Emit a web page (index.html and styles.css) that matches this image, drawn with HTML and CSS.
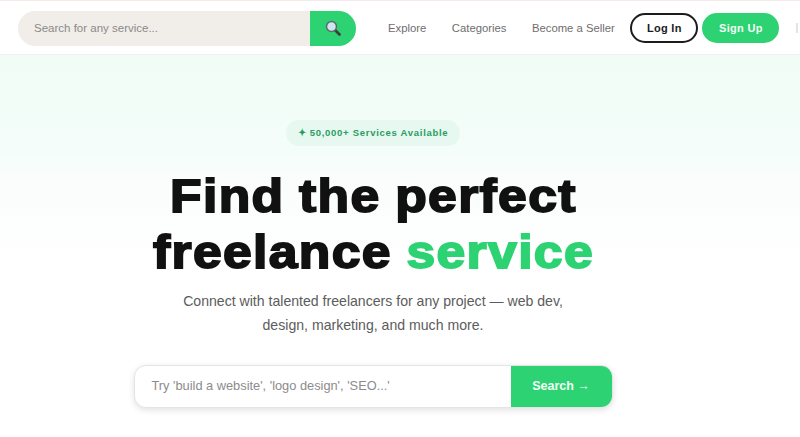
FILE: index.html
```html
<!DOCTYPE html>
<html lang="en">
<head>
<meta charset="utf-8">
<title>Find the perfect freelance service</title>
<link rel="stylesheet" href="styles.css">
</head>
<body>
<div class="top-line"></div>
<header class="nav">
  <form class="nav-search">
    <span class="nav-search-text">Search for any service...</span>
    <span class="nav-search-btn">
      <svg width="18" height="18" viewBox="0 0 18 18" aria-hidden="true">
        <line x1="11" y1="11" x2="15.5" y2="15.5" stroke="#3a3f3c" stroke-width="2.8" stroke-linecap="round"/>
        <circle cx="7.5" cy="7.5" r="5" fill="#cfe6ee" stroke="#5d6b70" stroke-width="1.5"/>
      </svg>
    </span>
  </form>
  <nav class="nav-links">
    <a>Explore</a>
    <a>Categories</a>
    <a>Become a Seller</a>
  </nav>
  <div class="nav-actions">
    <a class="btn btn-login">Log In</a>
    <a class="btn btn-signup">Sign Up</a>
  </div>
  <span class="nav-clipped"></span>
</header>
<main class="hero">
  <div class="badge">✦ 50,000+ Services Available</div>
  <h1 class="title">Find the perfect<br>freelance <span class="accent">service</span></h1>
  <p class="lead">Connect with talented freelancers for any project — web dev,<br>design, marketing, and much more.</p>
  <div class="hero-search">
    <span class="hero-search-text">Try 'build a website', 'logo design', 'SEO...'</span>
    <span class="hero-search-btn">Search <span class="arrow">→</span></span>
  </div>
</main>
</body>
</html>
```

FILE: styles.css
```css
* { box-sizing: border-box; }
html, body { margin: 0; height: 100%; }
body {
  width: 800px;
  height: 437px;
  overflow: hidden;
  background: #fff;
  font-family: "Liberation Sans", Arial, sans-serif;
}
.top-line { height: 1px; background: #f6e9ec; }
.nav {
  height: 54px;
  display: flex;
  align-items: center;
  padding: 1px 0 0 18px;
  background: #fff;
  border-bottom: 1px solid #f0f0f0;
}
.nav-search {
  flex: none;
  width: 338px;
  height: 35px;
  display: flex;
  margin: 0;
  background: #f1ede8;
  border-radius: 18px;
  overflow: hidden;
}
.nav-search-text {
  flex: 1;
  padding-left: 16px;
  font-size: 11.5px;
  line-height: 34px;
  color: #8a8a8a;
}
.nav-search-btn {
  width: 46px;
  display: flex;
  align-items: center;
  justify-content: center;
  background: #2dd272;
}
.nav-links {
  flex: none;
  display: flex;
  gap: 25.5px;
  margin-left: 32px;
  font-size: 11.3px;
  white-space: nowrap;
  color: #6e6e6e;
}
.nav-actions { flex: none; display: flex; gap: 4px; margin-left: 15.5px; }
.btn {
  height: 30px;
  border-radius: 15px;
  display: flex;
  align-items: center;
  justify-content: center;
  font-size: 11px;
  font-weight: 700;
  letter-spacing: .3px;
}
.btn-login { width: 68px; border: 2px solid #1c1c1c; color: #1c1c1c; background: #fff; }
.btn-signup { width: 77px; background: #2dd272; color: #f2fff7; }
.nav-clipped {
  flex: none;
  width: 2px;
  height: 10px;
  margin-left: 17px;
  background: #e4e4e4;
}
.hero {
  height: 382px;
  display: flex;
  flex-direction: column;
  align-items: center;
  padding: 65px 54px 0 0;
  background: linear-gradient(180deg, #f1fcf7 0%, #f4fdf9 25%, #fafdfc 32%, #fff 55%, #fff 100%);
}
.badge {
  height: 26px;
  padding: 0 12px;
  border-radius: 13px;
  background: #e6f8ef;
  color: #2a9d63;
  font-size: 9.5px;
  font-weight: 700;
  letter-spacing: .72px;
  line-height: 25px;
}
.title {
  margin: 22px 0 0;
  font-size: 47px;
  line-height: 56px;
  font-weight: 700;
  color: #111;
  text-align: center;
  -webkit-text-stroke: 1.8px #111;
  letter-spacing: 1.2px;
  word-spacing: -1px;
  transform: scaleX(1.1);
}
.accent { color: #2dd272; -webkit-text-stroke-color: #2dd272; }
.lead {
  margin: 9px 0 0;
  font-size: 14.1px;
  line-height: 24px;
  color: #5c5c5c;
  text-align: center;
}
.hero-search {
  margin-top: 28px;
  width: 479px;
  height: 43px;
  display: flex;
  background: #fff;
  border: 1px solid #e4e4e4;
  border-radius: 12px;
  overflow: hidden;
  box-shadow: 0 2px 6px rgba(0,0,0,.12);
}
.hero-search-text {
  flex: 1;
  padding-left: 17px;
  font-size: 12.8px;
  line-height: 40px;
  color: #8c8c8c;
}
.hero-search-btn {
  width: 101px;
  background: #2dd272;
  color: #f2fff7;
  font-size: 12.5px;
  font-weight: 700;
  line-height: 40px;
  text-align: center;
}
.arrow { font-weight: 400; }
```
